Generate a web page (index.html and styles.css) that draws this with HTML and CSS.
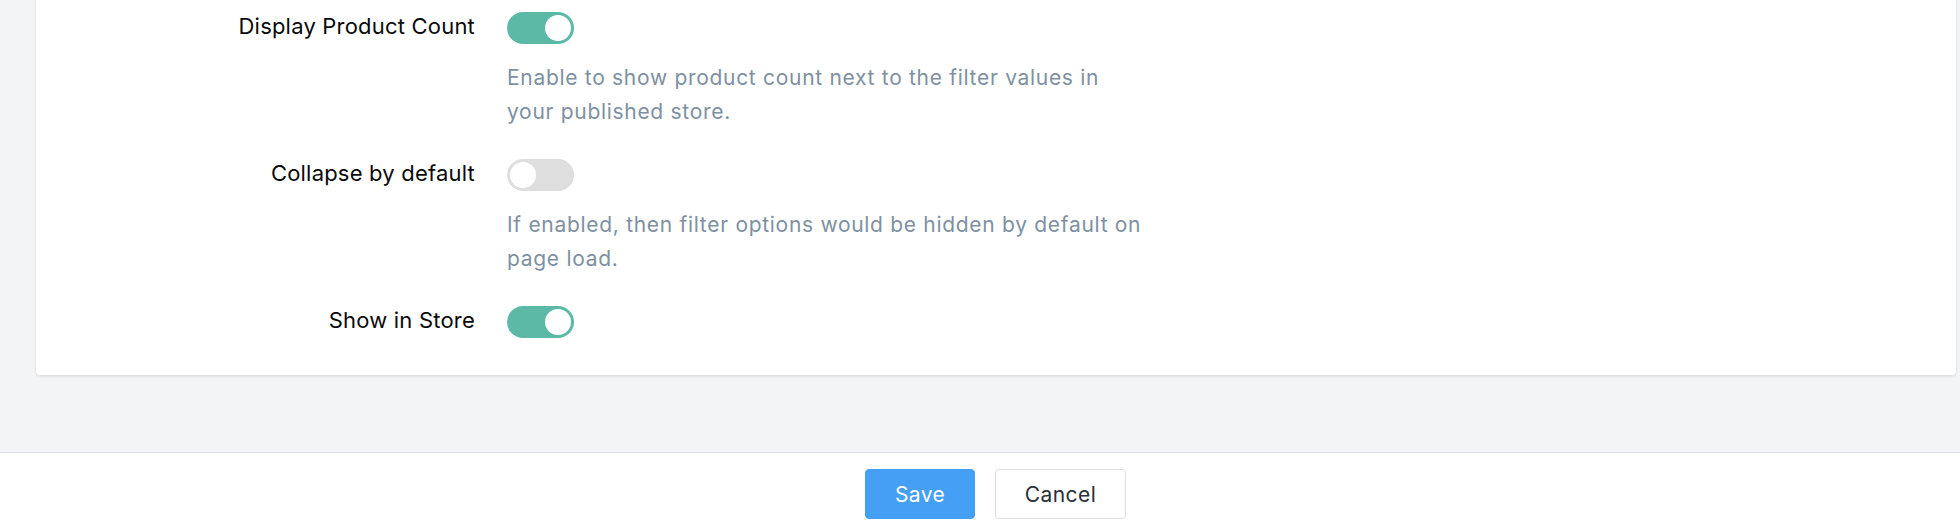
FILE: index.html
```html
<!DOCTYPE html>
<html lang="en">
<head>
<meta charset="utf-8">
<title>Filter settings</title>
<link rel="stylesheet" href="styles.css">
</head>
<body>
<div class="page">
  <main class="main">
    <section class="card">
      <div class="row">
        <div class="label">Display Product Count</div>
        <div class="control">
          <span class="toggle on"><span class="knob"></span></span>
          <p class="desc">Enable to show product count next to the filter values in your published store.</p>
        </div>
      </div>
      <div class="row">
        <div class="label">Collapse by default</div>
        <div class="control">
          <span class="toggle"><span class="knob"></span></span>
          <p class="desc">If enabled, then filter options would be hidden by default on page load.</p>
        </div>
      </div>
      <div class="row">
        <div class="label">Show in Store</div>
        <div class="control">
          <span class="toggle on"><span class="knob"></span></span>
        </div>
      </div>
    </section>
  </main>
  <footer class="footer">
    <button class="btn btn-primary" type="button">Save</button>
    <button class="btn btn-default" type="button">Cancel</button>
  </footer>
</div>
</body>
</html>
```

FILE: styles.css
```css
* { box-sizing: border-box; }
html, body {
  margin: 0;
  padding: 0;
  height: 100%;
}
body {
  font-family: Inter, "Noto Sans", sans-serif;
  background: #f3f4f6;
  color: #000;
  overflow: hidden;
}
.page {
  display: flex;
  flex-direction: column;
  height: 532px;
}
.main {
  flex: 1 1 auto;
  overflow: hidden;
  padding: 0 4px 0 36px;
}
.card {
  margin-top: -20px;
  background: #fff;
  border-radius: 4px;
  box-shadow: 0 1px 3px rgba(0, 0, 0, 0.12);
  padding: 32px 0 37px 0;
}
.row {
  display: grid;
  grid-template-columns: 439px 1fr;
  column-gap: 32px;
  align-items: start;
}
.row + .row {
  margin-top: 30px;
}
.label {
  font-size: 22px;
  line-height: 28px;
  letter-spacing: 0.2px;
  text-align: right;
  color: #0a0a0a;
}
.control {
  display: flex;
  flex-direction: column;
  align-items: flex-start;
}
.toggle {
  display: flex;
  align-items: center;
  width: 67px;
  height: 32px;
  border-radius: 16px;
  background: #dedede;
  padding: 3px;
}
.toggle .knob {
  width: 26px;
  height: 26px;
  border-radius: 50%;
  background: #fff;
}
.toggle.on {
  background: #5bb9a6;
  justify-content: flex-end;
}
.desc {
  margin: 17px 0 0 0;
  max-width: 640px;
  font-size: 21px;
  line-height: 34px;
  letter-spacing: 0.7px;
  color: #7e90a2;
}
.footer {
  flex: 0 0 80px;
  background: #fff;
  border-top: 1px solid #dcdfe5;
  display: flex;
  justify-content: center;
  align-items: center;
  gap: 20px;
  padding-left: 31px;
  padding-top: 3px;
}
.btn {
  font-family: Inter, "Noto Sans", sans-serif;
  font-size: 21px;
  letter-spacing: 0.4px;
  height: 50px;
  border-radius: 4px;
  cursor: pointer;
}
.btn-primary {
  width: 110px;
  background: #459ff4;
  border: 1px solid #459ff4;
  color: #fff;
}
.btn-default {
  width: 131px;
  background: #fff;
  border: 1px solid #dcdfe5;
  color: #2b2f38;
}
```
